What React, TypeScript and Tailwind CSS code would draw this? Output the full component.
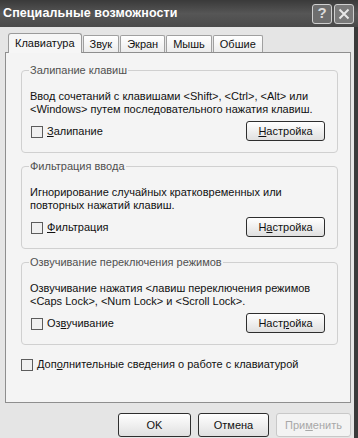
import React from "react";

const font = { fontFamily: '"Liberation Sans", Arial, sans-serif' };

const Checkbox = ({ label, accel }: { label: string; accel: number }) => (
  <label className="flex items-center gap-[4px] text-[11px] leading-[13px] text-[#111]">
    <span className="w-[12px] h-[12px] border border-[#5c5c5c] bg-[#f0f0f0]" />
    <span>
      {label.slice(0, accel)}
      <span className="underline">{label[accel]}</span>
      {label.slice(accel + 1)}
    </span>
  </label>
);

const XpButton = ({
  children,
  className = "",
  disabled = false,
}: {
  children: React.ReactNode;
  className?: string;
  disabled?: boolean;
}) => (
  <button
    className={
      "rounded-[3px] border text-[11px] flex items-center justify-center " +
      (disabled
        ? "border-[#c8c8c8] bg-[#f3f3f3] text-[#a8a8a8] "
        : "border-[#2e2e2e] bg-gradient-to-b from-[#ffffff] to-[#e0e0e0] text-[#111] ") +
      className
    }
  >
    {children}
  </button>
);

const Group = ({
  title,
  lines,
  check,
  accel,
  btnAccel,
}: {
  title: string;
  lines: string[];
  check: string;
  accel: number;
  btnAccel: number;
}) => {
  const btn = "Настройка";
  return (
    <fieldset className="border border-[#d0d0d0] rounded-[4px] pl-[8px] pr-[12px] pb-[11px]">
      <legend className="px-[1px] ml-[-1px] text-[11px] leading-[13px] text-[#505050]">{title}</legend>
      <div className="text-[11px] leading-[12.5px] text-[#111] mt-[13px] whitespace-nowrap">
        {lines.map((l, i) => (
          <div key={i}>{l}</div>
        ))}
      </div>
      <div className="flex items-center justify-between mt-[6px]">
        <div className="pl-[1px] pt-[1px]">
          <Checkbox label={check} accel={accel} />
        </div>
        <XpButton className="w-[79px] h-[20px]">
          {btn.slice(0, btnAccel)}
          <span className="underline">{btn[btnAccel]}</span>
          {btn.slice(btnAccel + 1)}
        </XpButton>
      </div>
    </fieldset>
  );
};

export default function App() {
  const tabs = ["Звук", "Экран", "Мышь", "Обшие"];
  return (
    <div className="w-[358px] h-[438px] overflow-hidden bg-[#e5e5e5] flex flex-col" style={font}>
      <div className="h-[27px] shrink-0 bg-gradient-to-b from-[#3a3a3a] via-[#565656] to-[#4a4a4a] flex items-center justify-between pl-[3px] pr-[4px]">
        <span className="text-white font-bold text-[12.5px] tracking-[0.1px]">Специальные возможности</span>
        <div className="flex gap-[2px]">
          <div className="w-[20px] h-[20px] rounded-[3px] border border-[#cfcfcf] bg-[#6e6e6e] flex items-center justify-center text-[#dcdcdc] font-bold text-[15px]">
            ?
          </div>
          <div className="w-[20px] h-[20px] rounded-[3px] border border-[#cfcfcf] bg-[#7a7a7a] flex items-center justify-center">
            <svg width="12" height="12" viewBox="0 0 12 12">
              <path d="M1.5 1.5 L10.5 10.5 M10.5 1.5 L1.5 10.5" stroke="#e8e8e8" strokeWidth="2" />
            </svg>
          </div>
        </div>
      </div>
      <div className="flex-1 flex border-r-[4px] border-[#3a3a3a]">
        <div className="flex-1 pl-[5px] pr-[3px] pt-[6px]">
          <div className="flex items-end h-[19px] pl-[3px]">
            <div className="h-[20px] px-[6px] mb-[-1px] relative z-10 border border-[#9a9a9a] border-b-0 rounded-t-[3px] bg-[#f6f6f6] flex items-center text-[11px] text-[#111]">
              Клавиатура
            </div>
            {tabs.map((t) => (
              <div
                key={t}
                className="h-[17px] px-[6px] ml-[1px] border border-[#a0a0a0] border-b-0 rounded-t-[2px] bg-gradient-to-b from-[#ffffff] to-[#ececec] flex items-center text-[11px] text-[#111]"
              >
                {t}
              </div>
            ))}
          </div>
          <div className="h-[351px] border border-[#8e8e8e] bg-[#f4f4f4] pl-[15px] pr-[12px] pt-[11px]">
            <div className="flex flex-col gap-[7px]">
              <Group
                title="Залипание клавиш"
                lines={[
                  "Ввод сочетаний с клавишами <Shift>, <Ctrl>, <Alt> или",
                  "<Windows> путем последовательного нажатия клавиш.",
                ]}
                check="Залипание"
                accel={0}
                btnAccel={0}
              />
              <Group
                title="Фильтрация ввода"
                lines={["Игнорирование случайных кратковременных или", "повторных нажатий клавиш."]}
                check="Фильтрация"
                accel={0}
                btnAccel={1}
              />
              <Group
                title="Озвучивание переключения режимов"
                lines={[
                  "Озвучивание нажатия <лавиш переключения режимов",
                  "<Caps Lock>, <Num Lock> и <Scroll Lock>.",
                ]}
                check="Озвучивание"
                accel={2}
                btnAccel={4}
              />
            </div>
            <div className="mt-[13px]">
              <Checkbox label="Дополнительные сведения о работе с клавиатурой" accel={3} />
            </div>
          </div>
          <div className="flex justify-end gap-[7px] mt-[10px]">
            <XpButton className="w-[73px] h-[24px]">OK</XpButton>
            <XpButton className="w-[71px] h-[24px]">Отмена</XpButton>
            <XpButton className="w-[75px] h-[24px]" disabled>
              При<span className="underline">м</span>енить
            </XpButton>
          </div>
        </div>
      </div>
    </div>
  );
}
